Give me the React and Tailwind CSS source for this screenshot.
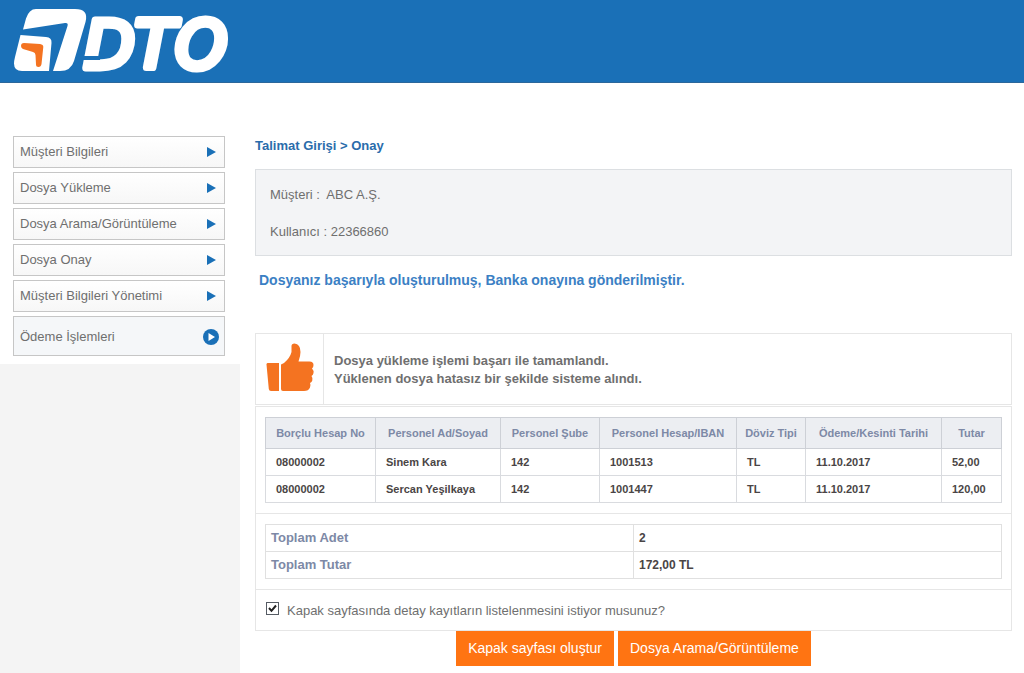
import React from 'react';

const menu = [
  'Müşteri Bilgileri',
  'Dosya Yükleme',
  'Dosya Arama/Görüntüleme',
  'Dosya Onay',
  'Müşteri Bilgileri Yönetimi',
];

const columns = [
  { label: 'Borçlu Hesap No', width: 'w-[110px]' },
  { label: 'Personel Ad/Soyad', width: 'w-[125px]' },
  { label: 'Personel Şube', width: 'w-[99px]' },
  { label: 'Personel Hesap/IBAN', width: 'w-[137px]' },
  { label: 'Döviz Tipi', width: 'w-[69px]' },
  { label: 'Ödeme/Kesinti Tarihi', width: 'w-[136px]' },
  { label: 'Tutar', width: 'w-[60px]' },
];

const rows = [
  ['08000002', 'Sinem Kara', '142', '1001513', 'TL', '11.10.2017', '52,00'],
  ['08000002', 'Sercan Yeşilkaya', '142', '1001447', 'TL', '11.10.2017', '120,00'],
];

const totals = [
  ['Toplam Adet', '2'],
  ['Toplam Tutar', '172,00 TL'],
];

function Logo() {
  return (
    <svg className="overflow-visible" width="240" height="82" viewBox="0 0 240 82" role="img" aria-label="DTO">
      <path
        fill="#fff"
        d="M36 9H75Q89 9 85.500 22L74 61Q71 71 60 71H53L67.500 26Q68.500 22.500 65 23L23 29.500L26 18.500Q29 9 36 9Z"
      />
      <path
        fill="#fff"
        d="M20.500 35L46 37Q52 37.500 51.500 43L49 71H22Q14 71 14 63.500Q14 61 15 57Z"
      />
      <path
        fill="#f47321"
        d="M24 43L40 44Q43.500 44.500 43.300 47L41.500 64Q41 67 38.500 67Q36 67 36 64.500L35.500 55Q35.300 52.700 33 52L23 49Q21 48 21 46Q21 43 24 43Z"
      />
      <text
        x="84"
        y="68"
        fill="#fff"
        stroke="#fff"
        strokeWidth="7"
        strokeLinejoin="round"
        className="font-['DejaVu_Sans',sans-serif] text-[66px] font-normal italic"
      >
        DTO
      </text>
      <path fill="#1a70b7" d="M82 56H101L100 60H81Z" />
    </svg>
  );
}

function ThumbUp() {
  return (
    <svg width="48" height="50" viewBox="0 0 48 50" aria-hidden="true" fill="#f47321">
      <path d="M1.500 20H13V48H5Q3 48 2.800 46L0.500 21.500Q0.500 20 1.500 20Z" />
      <path d="M15 21.500L18 20Q24 15 25.500 9V3Q25.500 0.500 28.500 0.500Q34.500 1 34.500 9Q34.500 13 32.500 18.500H43.500Q47.500 18.500 47.500 22Q47.500 24.500 46 25.500Q48 27.500 47.500 30Q47.300 32 45.500 33Q47 35 46.300 37.500Q45.800 39.300 44 40Q45 42 44 44.500Q42.500 48 38 48H17Q15 48 15 46Z" />
    </svg>
  );
}

export default function App() {
  return (
    <div className="flex min-h-screen flex-col bg-white font-['Liberation_Sans',Arial,sans-serif] text-[13px] text-[#6f6f6f]">
      <header className="h-[83px] border-b border-[#2b679b] bg-[#1a70b7]">
        <Logo />
      </header>

      <div className="flex flex-1">
        <aside className="flex w-60 shrink-0 flex-col">
          <nav className="flex flex-col gap-1 pt-[53px] pr-[15px] pb-2 pl-[13px]">
            {menu.map((item) => (
              <a
                key={item}
                href="#"
                className="flex h-8 items-center justify-between border border-[#c6c6c6] bg-linear-to-b from-white to-[#f7f7f7] pr-2 pl-1.5"
              >
                {item}
                <svg width="9" height="10" viewBox="0 0 9 10" aria-hidden="true">
                  <path d="M0 0L9 5L0 10Z" fill="#1a70b7" />
                </svg>
              </a>
            ))}
            <a
              href="#"
              className="flex h-10 items-center justify-between border border-[#c6c6c6] bg-[#f5f7f9] pt-0.5 pr-[5px] pl-1.5"
            >
              Ödeme İşlemleri
              <svg width="16" height="16" viewBox="0 0 16 16" aria-hidden="true">
                <circle cx="8" cy="8" r="8" fill="#1a70b7" />
                <path d="M5.500 4L12 8L5.500 12Z" fill="#fff" />
              </svg>
            </a>
          </nav>
          <div className="flex-1 bg-[#f4f4f4]" />
        </aside>

        <main className="min-w-0 flex-1 pt-[53px] pr-3 pb-2 pl-[15px]">
          <h1 className="text-[13px] leading-5 font-bold text-[#2a6cab]">Talimat Girişi &gt; Onay</h1>

          <section className="mt-[13px] flex flex-col gap-[17px] border border-[#dcdfe2] bg-[#f3f4f6] px-[14px] pt-[15px] pb-[13px] leading-5">
            <p>Müşteri :&nbsp; ABC A.Ş.</p>
            <p>Kullanıcı : 22366860</p>
          </section>

          <p className="mt-[14px] pl-1 text-[14px] leading-5 font-bold text-[#3b80c4]">
            Dosyanız başarıyla oluşturulmuş, Banka onayına gönderilmiştir.
          </p>

          <section className="mt-[43px] flex h-[72px] border border-[#e6e6e6]">
            <div className="flex w-[68px] items-center justify-center border-r border-[#e6e6e6] pb-0.5">
              <ThumbUp />
            </div>
            <p className="self-center pt-px pl-[10px] leading-[18px] font-bold">
              Dosya yükleme işlemi başarı ile tamamlandı.
              <br />
              Yüklenen dosya hatasız bir şekilde sisteme alındı.
            </p>
          </section>

          <div className="mt-px divide-y divide-[#e6e6e6] border border-[#e6e6e6]">
            <div className="px-[9px] py-[10px]">
              <table className="w-full table-fixed border-collapse text-[11px] font-bold">
                <thead>
                  <tr className="h-[31px] bg-[#eceef2] text-[#7d89a6]">
                    {columns.map((c) => (
                      <th key={c.label} className={`${c.width} border border-[#cdd0d6] p-0 whitespace-nowrap`}>
                        {c.label}
                      </th>
                    ))}
                  </tr>
                </thead>
                <tbody>
                  {rows.map((row) => (
                    <tr key={row[3]} className="h-[27px] text-[#4a4545]">
                      {row.map((cell, i) => (
                        <td key={columns[i].label} className="border border-[#d9dbdf] py-0 pr-0 pl-[10px] whitespace-nowrap">
                          {cell}
                        </td>
                      ))}
                    </tr>
                  ))}
                </tbody>
              </table>
            </div>

            <div className="px-[9px] py-[10px]">
              <table className="w-full table-fixed border-collapse font-bold">
                <tbody>
                  {totals.map(([label, value]) => (
                    <tr key={label} className="h-[27px]">
                      <th className="border border-[#e0e0e0] py-0 pl-[5px] text-left text-[#7d89a6]">{label}</th>
                      <td className="border border-[#e0e0e0] py-0 pl-[5px] text-[12px] text-[#4a4545]">{value}</td>
                    </tr>
                  ))}
                </tbody>
              </table>
            </div>

            <div className="flex h-10 items-center gap-2 px-[10px] pt-0.5">
              <span className="relative mb-1.5 block size-[13px]">
                <input
                  id="details"
                  type="checkbox"
                  defaultChecked
                  className="peer block size-[13px] appearance-none border border-[#555b63] bg-white"
                />
                <svg
                  className="pointer-events-none absolute inset-0 hidden peer-checked:block"
                  width="13"
                  height="13"
                  viewBox="0 0 13 13"
                  aria-hidden="true"
                >
                  <path d="M3 6L5.500 8.800L10 3.500" fill="none" stroke="#222" strokeWidth="2" />
                </svg>
              </span>
              <label htmlFor="details">Kapak sayfasında detay kayıtların listelenmesini istiyor musunuz?</label>
            </div>
          </div>

          <div className="flex justify-center gap-1 text-[14px] text-white">
            <button type="button" className="h-[35px] bg-[#ff7412] px-3">
              Kapak sayfası oluştur
            </button>
            <button type="button" className="h-[35px] bg-[#ff7412] px-3">
              Dosya Arama/Görüntüleme
            </button>
          </div>
        </main>
      </div>
    </div>
  );
}
